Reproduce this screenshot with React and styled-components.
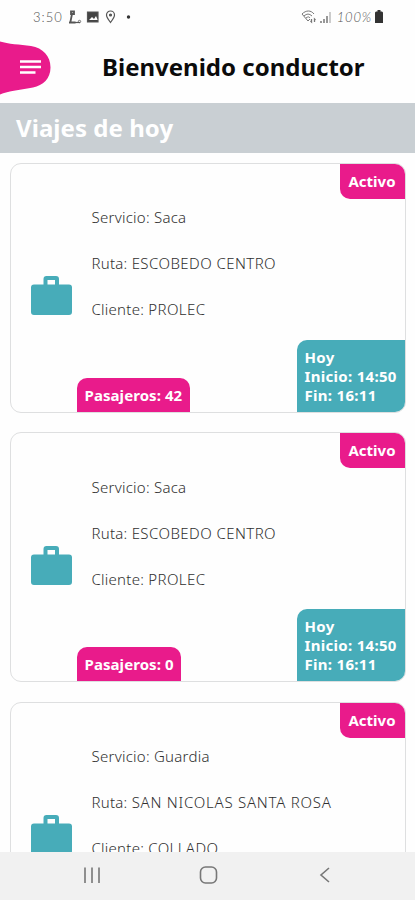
import React from 'react';
import styled, { createGlobalStyle } from 'styled-components';

const GlobalStyle = createGlobalStyle`
  :root {
    --pink: #e91b8b;
    --teal: #47acb9;
  }

  * {
    box-sizing: border-box;
  }

  body {
    margin: 0;
    background: #fefefe;
    font-family: 'Noto Sans', 'Open Sans', sans-serif;
  }
`;

const Screen = styled.div`
  display: flex;
  flex-direction: column;
  width: 100%;
  height: 900px;
  overflow: hidden;
`;

const StatusBar = styled.div`
  display: flex;
  flex-shrink: 0;
  justify-content: space-between;
  height: 34px;
  padding: 0 32px 0 33px;
  color: #555;
`;

const StatusGroup = styled.div`
  display: flex;
  align-items: center;
  height: 33px;
  gap: ${({ $gap }) => $gap}px;
`;

const StatusText = styled.span`
  font-family: 'Lato', sans-serif;
  font-size: 13px;
  font-weight: 300;
  font-style: ${({ $italic }) => ($italic ? 'italic' : 'normal')};
  letter-spacing: ${({ $spacing }) => $spacing}px;
`;

const Header = styled.header`
  display: flex;
  flex-shrink: 0;
  align-items: center;
  height: 69px;
`;

const MenuButton = styled.button`
  display: block;
  width: 52px;
  height: 54px;
  margin-top: -2px;
  padding: 0;
  border: 0;
  background: none;
`;

const Title = styled.h1`
  margin: 0 0 3px 50px;
  color: #0b0b0b;
  font-size: 24px;
  line-height: 32px;
  font-weight: 700;
  white-space: nowrap;
`;

const SectionTitle = styled.h2`
  flex-shrink: 0;
  height: 49.5px;
  margin: 0;
  padding-left: 16px;
  background: #c9cfd3;
  color: white;
  font-size: 24px;
  line-height: 50px;
  font-weight: 700;
  letter-spacing: 0.05px;
`;

const TripList = styled.main`
  display: flex;
  flex: 1;
  flex-direction: column;
  gap: 19.5px;
  min-height: 0;
  padding: 10px 9.5px 0 10px;
  overflow: hidden;
`;

const Card = styled.article`
  display: flex;
  flex-direction: column;
  flex-shrink: 0;
  justify-content: space-between;
  height: 250px;
  border: 1px solid #dedfe0;
  border-radius: 11px;
  background: #fefefe;
`;

const Status = styled.div`
  align-self: flex-end;
  width: 65px;
  height: 35px;
  border-radius: 0 10px 0 10px;
  background: var(--pink);
  color: white;
  font-size: 15px;
  line-height: 35px;
  font-weight: 700;
  text-align: center;
`;

const TripBody = styled.div`
  display: flex;
  flex: 1;
  padding: 8.5px 0 0 20px;
`;

const CaseIcon = styled.svg`
  width: 41px;
  height: 39px;
  margin: 69px 19.5px 0 0;
  fill: var(--teal);
`;

const Details = styled.div`
  display: flex;
  flex-direction: column;
  gap: 26px;
  color: #303030;
  font-size: 15px;
  line-height: 20px;
  font-weight: 300;
  white-space: nowrap;
`;

const Detail = styled.div`
  letter-spacing: 0.25px;
`;

const Value = styled.span`
  letter-spacing: ${({ $spacing }) => $spacing}px;
`;

const CardFooter = styled.div`
  display: flex;
  align-items: flex-end;
  justify-content: space-between;
  padding-left: 66px;
`;

const Passengers = styled.div`
  height: 34px;
  padding: 0 7.5px;
  border-radius: 10px 10px 0 0;
  background: var(--pink);
  color: white;
  font-size: 15px;
  line-height: 34px;
  font-weight: 700;
  letter-spacing: 0.07px;
`;

const Schedule = styled.div`
  width: 108px;
  height: 72px;
  padding: 8px 0 0 8px;
  border-radius: 10px 0 10px 0;
  background: var(--teal);
  color: white;
  font-size: 15px;
  line-height: 19px;
  font-weight: 700;
  letter-spacing: 0.3px;
  white-space: nowrap;
`;

const NavBar = styled.nav`
  display: flex;
  flex-shrink: 0;
  justify-content: space-between;
  height: 48px;
  padding: 13px 78px 0 80px;
  background: #f1f1f1;
`;

const NavIcon = styled.svg`
  width: 24px;
  height: 20px;
  fill: none;
  stroke: #777;
  stroke-width: 1.6;
`;

const trips = [
  { service: 'Saca', route: 'ESCOBEDO CENTRO', client: 'PROLEC', passengers: 42 },
  { service: 'Saca', route: 'ESCOBEDO CENTRO', client: 'PROLEC', passengers: 0 },
  { service: 'Guardia', route: 'SAN NICOLAS SANTA ROSA', client: 'COLLADO', passengers: 0, spacing: 0.76 },
];

function StatusIcons() {
  return (
    <svg width="66" height="16" viewBox="0 0 66 16" fill="none" stroke="#555" strokeWidth="1.2">
      <path d="M3 2.500h3v2.500H3zM4 5L2.500 12.500M1 13.500h6.500" strokeWidth="1.800" />
      <path d="M7 13.500h5" />
      <circle cx="11.500" cy="12.500" r="1.200" strokeWidth="0.800" />
      <path d="M19.500 3h10.500v10H19.500z" fill="#444" />
      <path d="M21 11l3-3 2 2 2-3 1.500 3.500v.5z" fill="#fff" stroke="none" />
      <path d="M42.500 13.500c-3-4-4-5.500-4-7.500a4 4 0 0 1 8 0c0 2-1 3.500-4 7.500z" />
      <circle cx="42.500" cy="6" r="1" fill="#555" />
      <circle cx="60.500" cy="8" r="1.700" fill="#333" stroke="none" />
    </svg>
  );
}

function SignalIcons() {
  return (
    <svg width="33" height="16" viewBox="0 0 33 16" fill="none" stroke="#777">
      <path d="M1 5c4-4 9-4 12 0M3 7c3-2.500 5-2.500 8 0M5 9c2-1.500 3-1.500 4 0M1 5l6 7 2-2" />
      <path d="M10.500 10v3l-1-1M13.500 13v-3l1 1" strokeWidth="1.300" />
      <path d="M20 14v-2M23 14v-4M26 14V7" strokeWidth="1.500" />
      <path d="M29 14V3" stroke="#bbb" strokeWidth="1.500" />
    </svg>
  );
}

function Trip({ trip }) {
  return (
    <Card>
      <Status>Activo</Status>
      <TripBody>
        <CaseIcon viewBox="0 0 41 39">
          <path
            fillRule="evenodd"
            d="M3 8.500H12.500V3Q12.500 0 15.500 0H25Q28 0 28 3V8.500H38Q41 8.500 41 11.500V36Q41 39 38 39H3Q0 39 0 36V11.500Q0 8.500 3 8.500ZM16.500 4V8.500H24V4Z"
          />
        </CaseIcon>
        <Details>
          <Detail>Servicio: {trip.service}</Detail>
          <Detail>
            Ruta: <Value $spacing={trip.spacing || 0.43}>{trip.route}</Value>
          </Detail>
          <Detail>
            Cliente: <Value $spacing={0.4}>{trip.client}</Value>
          </Detail>
        </Details>
      </TripBody>
      <CardFooter>
        <Passengers>Pasajeros: {trip.passengers}</Passengers>
        <Schedule>
          <div>Hoy</div>
          <div>Inicio: 14:50</div>
          <div>Fin: 16:11</div>
        </Schedule>
      </CardFooter>
    </Card>
  );
}

function App() {
  return (
    <>
      <GlobalStyle />
      <Screen>
        <StatusBar>
          <StatusGroup $gap={5}>
            <StatusText $spacing={1}>3:50</StatusText>
            <StatusIcons />
          </StatusGroup>
          <StatusGroup $gap={3}>
            <SignalIcons />
            <StatusText $italic $spacing={0.8}>100%</StatusText>
            <svg width="8" height="13" viewBox="0 0 8 13">
              <path d="M2.500 0h3v1.500H7l1 1V13H0V2.500l1-1h1.500z" fill="#333" />
            </svg>
          </StatusGroup>
        </StatusBar>

        <Header>
          <MenuButton aria-label="Menú">
            <svg width="52" height="54" viewBox="0 0 52 54">
              <path d="M0 0.500C8 3 20 3.500 31 5C43 7 50.500 15 50.500 26.500C50.500 37.500 43 44.500 33 46.500C22 48.500 8 50 0 53.500Z" fill="#e91b8b" />
              <path d="M20 20.500H41M20 26H41M20 31.500H35.500" stroke="white" strokeWidth="2.700" />
            </svg>
          </MenuButton>
          <Title>Bienvenido conductor</Title>
        </Header>

        <SectionTitle>Viajes de hoy</SectionTitle>

        <TripList>
          {trips.map((trip, index) => (
            <Trip key={index} trip={trip} />
          ))}
        </TripList>

        <NavBar>
          <NavIcon viewBox="0 0 24 20">
            <path d="M5 2.500V18M12 2.500V18M19 2.500V18" />
          </NavIcon>
          <NavIcon viewBox="0 0 24 20">
            <rect x="3.500" y="2" width="16" height="16" rx="5" />
          </NavIcon>
          <NavIcon viewBox="0 0 24 20">
            <path d="M16 3L8 10L16 17" />
          </NavIcon>
        </NavBar>
      </Screen>
    </>
  );
}

export default App;
